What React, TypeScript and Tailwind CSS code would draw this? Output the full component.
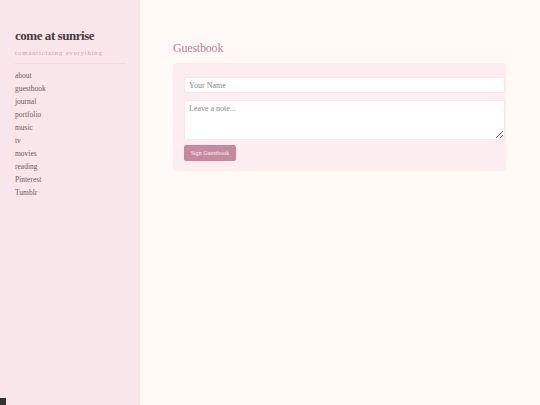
import React from "react";

export default function App() {
  const links = ["about", "guestbook", "journal", "portfolio", "music", "tv", "movies", "reading", "Pinterest", "Tumblr"];
  return (
    <div className="relative flex min-h-screen w-full bg-[#fffaf5]" style={{ fontFamily: '"Liberation Serif", "DejaVu Serif", serif' }}>
      <aside className="w-[140px] min-h-screen shrink-0 bg-[#f9e6ea] pl-[15px] pr-[14px] pt-[28px]">
        <h1 className="text-[13px] font-bold leading-[16px] text-[#4a3a3e] tracking-[-0.45px]">come at sunrise</h1>
        <p className="mt-[4px] text-[6.8px] leading-[10px] tracking-[0.8px] text-[#c8a5ae]">romanticizing everything</p>
        <div className="mt-[5px] h-px bg-[#f1d9de]" />
        <nav className="mt-[5px] flex flex-col">
          {links.map((l) => (
            <a key={l} className="text-[7.5px] leading-[13px] text-[#6e5a5f]">{l}</a>
          ))}
        </nav>
      </aside>
      <main className="flex-1 pl-[33px] pr-[34px] pt-[41px]">
        <h2 className="text-[12px] font-normal leading-[14px] tracking-[-0.2px] text-[#c27f98]">Guestbook</h2>
        <div className="mt-[8px] rounded-[4px] bg-[#fdedf0] pl-[11px] pr-[1px] pt-[14px] pb-[10px]">
          <input
            className="block h-[16px] w-full rounded-[2px] border border-[#f7e6ea] bg-white px-[4px] text-[8px] text-[#777] placeholder:text-[#888] outline-none"
            placeholder="Your Name"
            style={{ fontFamily: '"Liberation Serif", serif' }}
          />
          <textarea
            className="mt-[7px] block h-[40px] w-full rounded-[2px] border border-[#f7e6ea] bg-white px-[4px] py-[2px] text-[8px] text-[#777] placeholder:text-[#888] outline-none"
            placeholder="Leave a note..."
            style={{ fontFamily: '"Liberation Serif", serif' }}
          />
          <button className="mt-[5px] block h-[16px] w-[52px] rounded-[2px] bg-[#c68aa0] text-[6px] text-[#fdf2f5]" style={{ fontFamily: '"Liberation Serif", serif' }}>
            Sign Guestbook
          </button>
        </div>
      </main>
      <div className="absolute bottom-0 left-0 h-[7px] w-[6px] bg-[#333]" />
    </div>
  );
}
